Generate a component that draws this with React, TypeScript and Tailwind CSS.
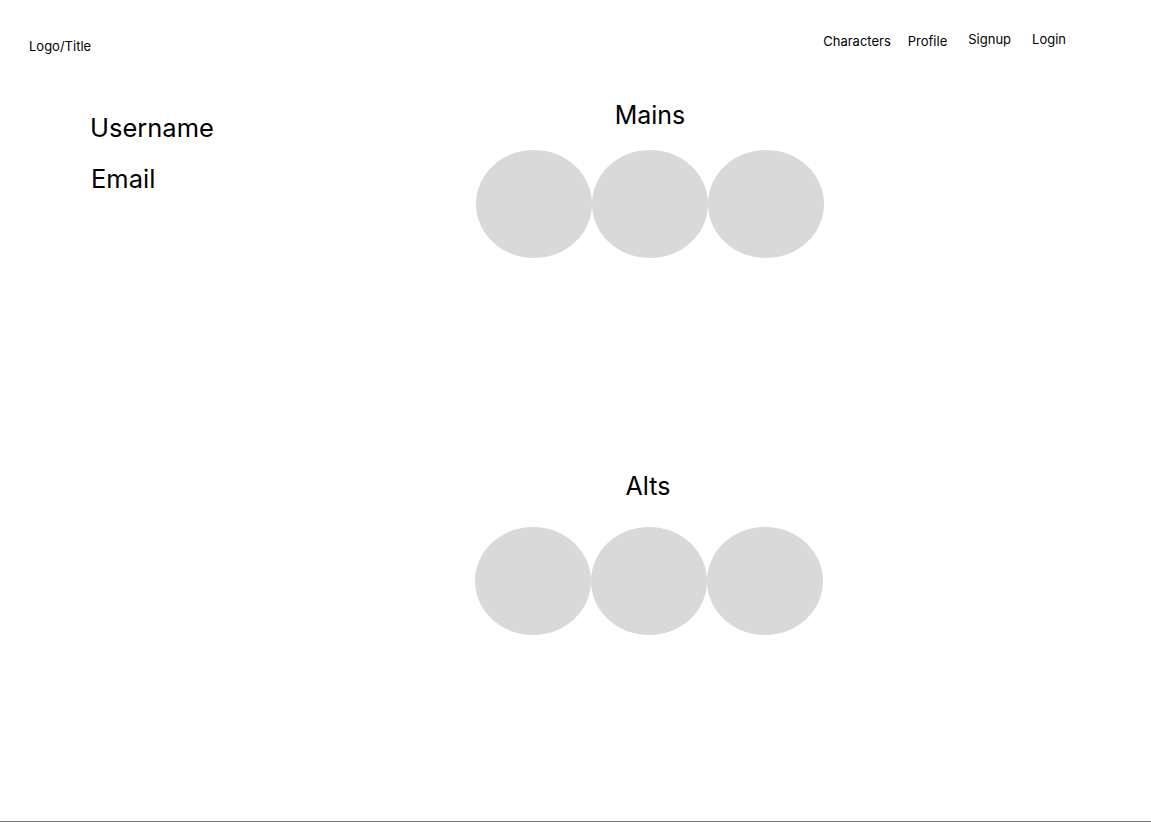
const mains = [1, 2, 3];
const alts = [1, 2, 3];

function CharacterRow({ items }: { items: number[] }) {
  return (
    <div className="flex">
      {items.map((i) => (
        <div key={i} className="w-[116px] h-[108px] rounded-[50%] bg-[#d9d9d9]" />
      ))}
    </div>
  );
}

export default function App() {
  return (
    <div className="h-[822px] w-full bg-white border-b border-[#757575] font-['Inter',sans-serif] text-black overflow-hidden">
      <header className="h-[99px] flex items-start justify-between pl-[29px]">
        <div className="mt-[36px] text-[13px] leading-5">Logo/Title</div>
        <nav className="flex items-start text-[13px] leading-5 mr-[85px]">
          <a className="mt-[31px]">Characters</a>
          <a className="mt-[31px] ml-[17px]">Profile</a>
          <a className="mt-[29px] ml-[21px]">Signup</a>
          <a className="mt-[29px] ml-[21px]">Login</a>
        </nav>
      </header>

      <main className="flex">
        <aside className="w-[476px] pl-[90px] text-[25.5px] leading-8">
          <p className="mt-[13px]">Username</p>
          <p className="mt-[19px] ml-[1px]">Email</p>
        </aside>

        <section className="w-[348px] flex flex-col items-center">
          <h2 className="text-[25px] leading-8">Mains</h2>
          <div className="mt-[19px]">
            <CharacterRow items={mains} />
          </div>

          <h2 className="mt-[212px] -ml-[4px] text-[25px] leading-8">Alts</h2>
          <div className="mt-[25px] -ml-[2px]">
            <CharacterRow items={alts} />
          </div>
        </section>
      </main>
    </div>
  );
}
